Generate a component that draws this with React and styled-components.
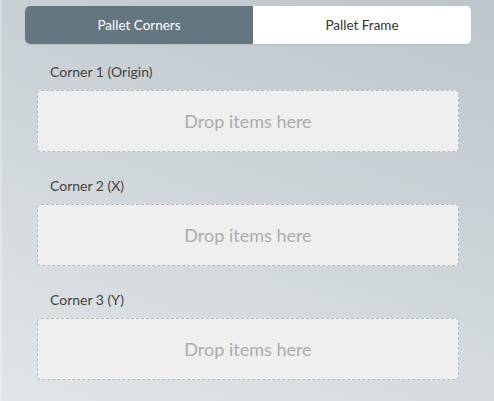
import React, { useState } from "react";
import styled, { createGlobalStyle } from "styled-components";

const GlobalStyle = createGlobalStyle`
  html, body {
    margin: 0;
    padding: 0;
    height: 100%;
  }
  body {
    font-family: Lato, "Open Sans", sans-serif;
    background: linear-gradient(200deg, #bcc5ca 0%, #cdd4d8 45%, #e1e5e8 100%);
    min-height: 401px;
  }
`;

const Panel = styled.div`
  padding: 6px 23px 0 25px;
  height: 401px;
  box-sizing: border-box;
  box-shadow: inset 2px 0 0 rgba(255, 255, 255, 0.25);
`;

const Tabs = styled.div`
  display: flex;
  height: 38px;
  border-radius: 5px;
  overflow: hidden;
  background: #ffffff;
  box-shadow: 0 1px 2px rgba(0, 0, 0, 0.08);
`;

const Tab = styled.button`
  flex: 1 1 auto;
  border: none;
  margin: 0;
  padding: 0;
  font-family: Lato, sans-serif;
  font-size: 13.5px;
  cursor: pointer;
  background: ${(p) => (p.$active ? "#647680" : "#ffffff")};
  color: ${(p) => (p.$active ? "#ffffff" : "#333333")};
`;

const Section = styled.div`
  margin: 19px 12px 0 12px;

  & + & {
    margin-top: 25px;
  }
`;

const Label = styled.div`
  font-size: 14px;
  line-height: 18px;
  color: #444444;
  padding-left: 13px;
  margin-bottom: 9px;
`;

const DropZone = styled.div`
  height: 62px;
  box-sizing: border-box;
  border: 1px dashed #b9bcbe;
  border-radius: 4px;
  background: #efefef;
  display: flex;
  align-items: center;
  justify-content: center;
  font-size: 18px;
  color: #acacac;
`;

const corners = ["Corner 1 (Origin)", "Corner 2 (X)", "Corner 3 (Y)"];

export default function App() {
  const [tab, setTab] = useState("corners");
  return (
    <>
      <GlobalStyle />
      <Panel>
        <Tabs>
          <Tab $active={tab === "corners"} onClick={() => setTab("corners")}>
            Pallet Corners
          </Tab>
          <Tab $active={tab === "frame"} onClick={() => setTab("frame")}>
            Pallet Frame
          </Tab>
        </Tabs>
        {corners.map((c) => (
          <Section key={c}>
            <Label>{c}</Label>
            <DropZone>Drop items here</DropZone>
          </Section>
        ))}
      </Panel>
    </>
  );
}
